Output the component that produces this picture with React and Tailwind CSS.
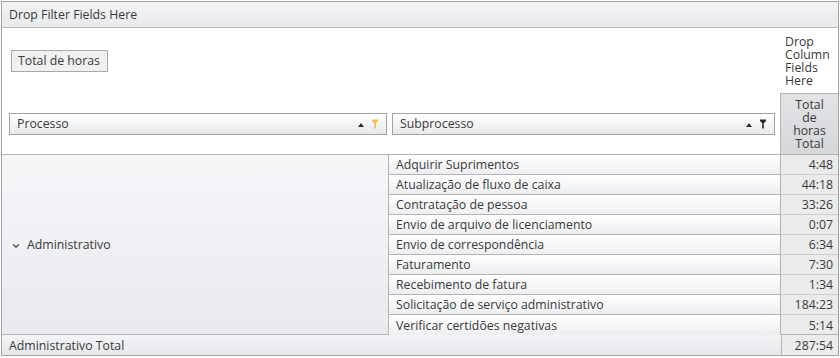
import { ChevronDown } from "lucide-react";

const rows = [
  { name: "Adquirir Suprimentos", hours: "4:48" },
  { name: "Atualização de fluxo de caixa", hours: "44:18" },
  { name: "Contratação de pessoa", hours: "33:26" },
  { name: "Envio de arquivo de licenciamento", hours: "0:07" },
  { name: "Envio de correspondência", hours: "6:34" },
  { name: "Faturamento", hours: "7:30" },
  { name: "Recebimento de fatura", hours: "1:34" },
  { name: "Solicitação de serviço administrativo", hours: "184:23" },
  { name: "Verificar certidões negativas", hours: "5:14" },
];

function SortUp() {
  return (
    <svg width="6" height="4" viewBox="0 0 6 4" className="block">
      <path d="M3 0 L6 4 H0 Z" fill="#2b2b2b" />
    </svg>
  );
}

function FilterPin({ color }) {
  return (
    <svg width="6" height="10" viewBox="0 0 6 10" className="block">
      <path d="M0 0.5 H6 V2 L3.8 4.2 V9.5 H2.2 V4.2 L0 2 Z" fill={color} />
    </svg>
  );
}

function FieldHeader({ label, pinColor, className }) {
  return (
    <div
      className={
        "h-[22px] flex items-center border border-[#a3a3a3] bg-gradient-to-b from-white to-[#e7e9ec] pl-[7px] pr-[8px] " +
        className
      }
    >
      <span className="flex-1 pt-px">{label}</span>
      <div className="flex items-center gap-[8px]">
        <div className="pt-[2px]">
          <SortUp />
        </div>
        <FilterPin color={pinColor} />
      </div>
    </div>
  );
}

export default function App() {
  return (
    <div className="p-px bg-white">
      <div
        className="w-[838px] h-[355px] border border-[#a3a3a3] text-[12.3px] text-[#3a3a3a] flex flex-col"
        style={{ fontFamily: '"Open Sans", "Liberation Sans", sans-serif' }}
      >
        {/* filter drop zone */}
        <div className="h-[26px] shrink-0 border-b border-[#b4b4b4] bg-gradient-to-b from-[#f3f4f6] to-[#e7e9ec] pl-[7px] pt-px flex items-center">
          Drop Filter Fields Here
        </div>

        {/* data + row/column field area */}
        <div className="h-[127px] shrink-0 flex border-b border-[#b4b4b4]">
          <div className="flex-1 flex flex-col pl-[7px]">
            <div className="mt-[22px] ml-[2px] w-[97px] h-[22px] border border-[#a8a8a8] bg-[#f0f0f0] flex items-center pl-[6px] pt-px">
              Total de horas
            </div>
            <div className="mt-[41px] flex gap-[5px]">
              <FieldHeader label="Processo" pinColor="#efbf4f" className="w-[378px]" />
              <FieldHeader label="Subprocesso" pinColor="#2b2b2b" className="w-[383px]" />
            </div>
          </div>
          <div className="w-[58px] flex flex-col">
            <div className="flex-1 pl-[5px] pt-[7px] leading-[13px]">
              Drop
              <br />
              Column
              <br />
              Fields
              <br />
              Here
            </div>
            <div className="h-[61px] border-l border-t border-[#b4b4b4] bg-gradient-to-b from-[#e2e3e5] to-[#d6d7da] flex flex-col items-center justify-center leading-[13px] text-center">
              <span>Total</span>
              <span>de</span>
              <span>horas</span>
              <span>Total</span>
            </div>
          </div>
        </div>

        {/* body rows */}
        <div className="flex h-[180px] shrink-0 border-b border-[#b4b4b4]">
          <div className="w-[387px] border-r border-[#b4b4b4] bg-gradient-to-b from-[#f5f6f8] to-[#e8eaee] flex items-center pl-[9px] gap-[6px] pt-[2px]">
            <ChevronDown size={10} strokeWidth={3} color="#555" />
            <span>Administrativo</span>
          </div>
          <div className="w-[391px] flex flex-col">
            {rows.map((r, i) => (
              <div
                key={r.name}
                className={
                  "h-[20px] flex items-center pl-[7px] pt-[2px] bg-gradient-to-b from-white to-[#eceef1] " +
                  (i < rows.length - 1 ? "border-b border-[#b4b4b4]" : "")
                }
              >
                {r.name}
              </div>
            ))}
          </div>
          <div className="flex-1 border-l border-[#b4b4b4] bg-[#ebebeb] flex flex-col">
            {rows.map((r, i) => (
              <div
                key={r.name}
                className={
                  "h-[20px] flex items-center justify-end pr-[5px] pt-[2px] " +
                  (i < rows.length - 1 ? "border-b border-[#cdcdcd]" : "")
                }
              >
                {r.hours}
              </div>
            ))}
          </div>
        </div>

        {/* grand total */}
        <div className="flex-1 flex">
          <div className="w-[779px] bg-gradient-to-b from-[#f3f4f6] to-[#e6e8eb] flex items-center pl-[7px] pt-[2px]">
            Administrativo Total
          </div>
          <div className="flex-1 border-l border-[#b4b4b4] bg-[#ebebeb] flex items-center justify-end pr-[5px] pt-[2px]">
            287:54
          </div>
        </div>
      </div>
    </div>
  );
}
